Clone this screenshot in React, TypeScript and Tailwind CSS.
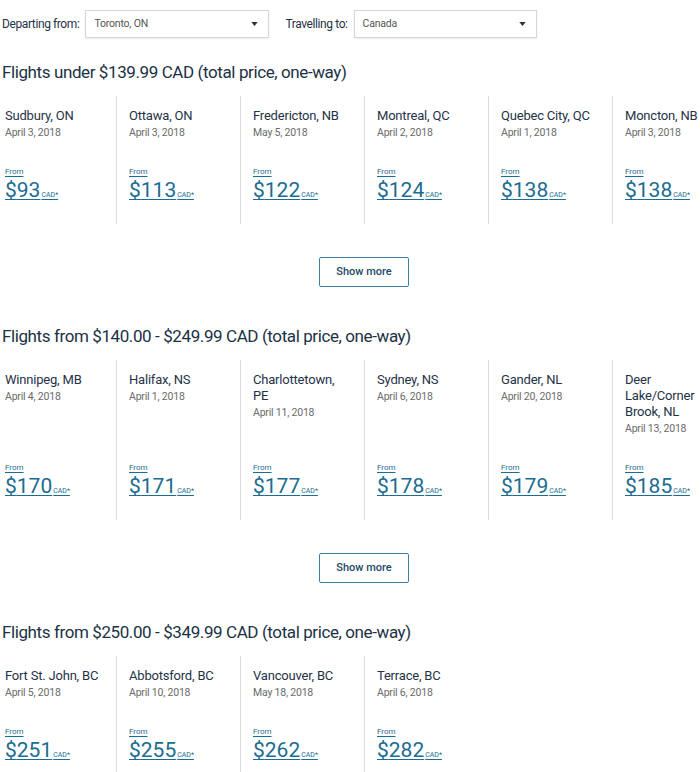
import React from 'react';

type Deal = { city: string; date: string; price: number };

const sections: { title: string; deals: Deal[]; more: boolean }[] = [
  {
    title: 'Flights under $139.99 CAD (total price, one-way)',
    more: true,
    deals: [
      { city: 'Sudbury, ON', date: 'April 3, 2018', price: 93 },
      { city: 'Ottawa, ON', date: 'April 3, 2018', price: 113 },
      { city: 'Fredericton, NB', date: 'May 5, 2018', price: 122 },
      { city: 'Montreal, QC', date: 'April 2, 2018', price: 124 },
      { city: 'Quebec City, QC', date: 'April 1, 2018', price: 138 },
      { city: 'Moncton, NB', date: 'April 3, 2018', price: 138 },
    ],
  },
  {
    title: 'Flights from $140.00 - $249.99 CAD (total price, one-way)',
    more: true,
    deals: [
      { city: 'Winnipeg, MB', date: 'April 4, 2018', price: 170 },
      { city: 'Halifax, NS', date: 'April 1, 2018', price: 171 },
      { city: 'Charlottetown, PE', date: 'April 11, 2018', price: 177 },
      { city: 'Sydney, NS', date: 'April 6, 2018', price: 178 },
      { city: 'Gander, NL', date: 'April 20, 2018', price: 179 },
      { city: 'Deer Lake/Corner Brook, NL', date: 'April 13, 2018', price: 185 },
    ],
  },
  {
    title: 'Flights from $250.00 - $349.99 CAD (total price, one-way)',
    more: false,
    deals: [
      { city: 'Fort St. John, BC', date: 'April 5, 2018', price: 251 },
      { city: 'Abbotsford, BC', date: 'April 10, 2018', price: 255 },
      { city: 'Vancouver, BC', date: 'May 18, 2018', price: 262 },
      { city: 'Terrace, BC', date: 'April 6, 2018', price: 282 },
    ],
  },
];

function Select({ value, width }: { value: string; width: string }) {
  return (
    <div
      className={`${width} h-[28px] flex items-center justify-between pl-[8px] pr-[10px] bg-white border border-[#d6d6d6] shadow-[0_1px_2px_rgba(0,0,0,0.08)]`}
    >
      <span className="text-[10.5px] tracking-[-0.2px] text-[#555]">{value}</span>
      <svg width="7" height="4" viewBox="0 0 8 5">
        <path d="M0 0h8L4 5z" fill="#333" />
      </svg>
    </div>
  );
}

function DealCard({ deal }: { deal: Deal }) {
  return (
    <div className="w-[124px] shrink-0 border-l border-[#dcdcdc] pl-[12px] pr-[16px] pt-[12px] pb-[22px] flex flex-col">
      <div className="text-[13px] tracking-[-0.2px] leading-4 text-[#1f3348]">{deal.city}</div>
      <div className="text-[10.5px] tracking-[-0.2px] leading-4 mt-[1px] text-[#6a6a6a]">{deal.date}</div>
      <a href="#" className="mt-auto pt-[26px] text-[#1b6c92] underline decoration-1 underline-offset-[2px] block">
        <div className="text-[8px] leading-[10px]">From</div>
        <div className="mt-[1px] h-[24px] text-[21px] leading-[24px] whitespace-nowrap">
          <span>${deal.price}</span>
          <span className="text-[7px] leading-none ml-[1px]">CAD*</span>
        </div>
      </a>
    </div>
  );
}

export default function App() {
  return (
    <div className="w-[700px] h-[772px] overflow-hidden bg-white px-[2px] pt-[10px] font-['Roboto',sans-serif]">
      <div className="flex items-center">
        <span className="text-[12px] tracking-[-0.4px] text-[#1f3348] mr-[6px]">Departing from:</span>
        <Select value="Toronto, ON" width="w-[184px]" />
        <span className="text-[12px] tracking-[-0.4px] text-[#1f3348] ml-[16px] mr-[6px]">Travelling to:</span>
        <Select value="Canada" width="w-[183px]" />
      </div>

      {sections.map((s, i) => (
        <section key={i} className={i === 0 ? 'mt-[22px]' : 'mt-[37px]'}>
          <h2 className="text-[17px] tracking-[-0.4px] leading-6 text-[#1c3145]">{s.title}</h2>
          <div className="mt-[12px] -ml-[10px] w-[744px]">
            <div className="flex">
              {s.deals.map((d) => (
                <DealCard key={d.city} deal={d} />
              ))}
            </div>
            {s.more && (
              <div className="flex justify-center mt-[33px]">
                <button className="w-[90px] h-[30px] border border-[#3d7f9c] bg-white text-[11px] font-medium text-[#1d4a66] rounded-[2px]">
                  Show more
                </button>
              </div>
            )}
          </div>
        </section>
      ))}
    </div>
  );
}
